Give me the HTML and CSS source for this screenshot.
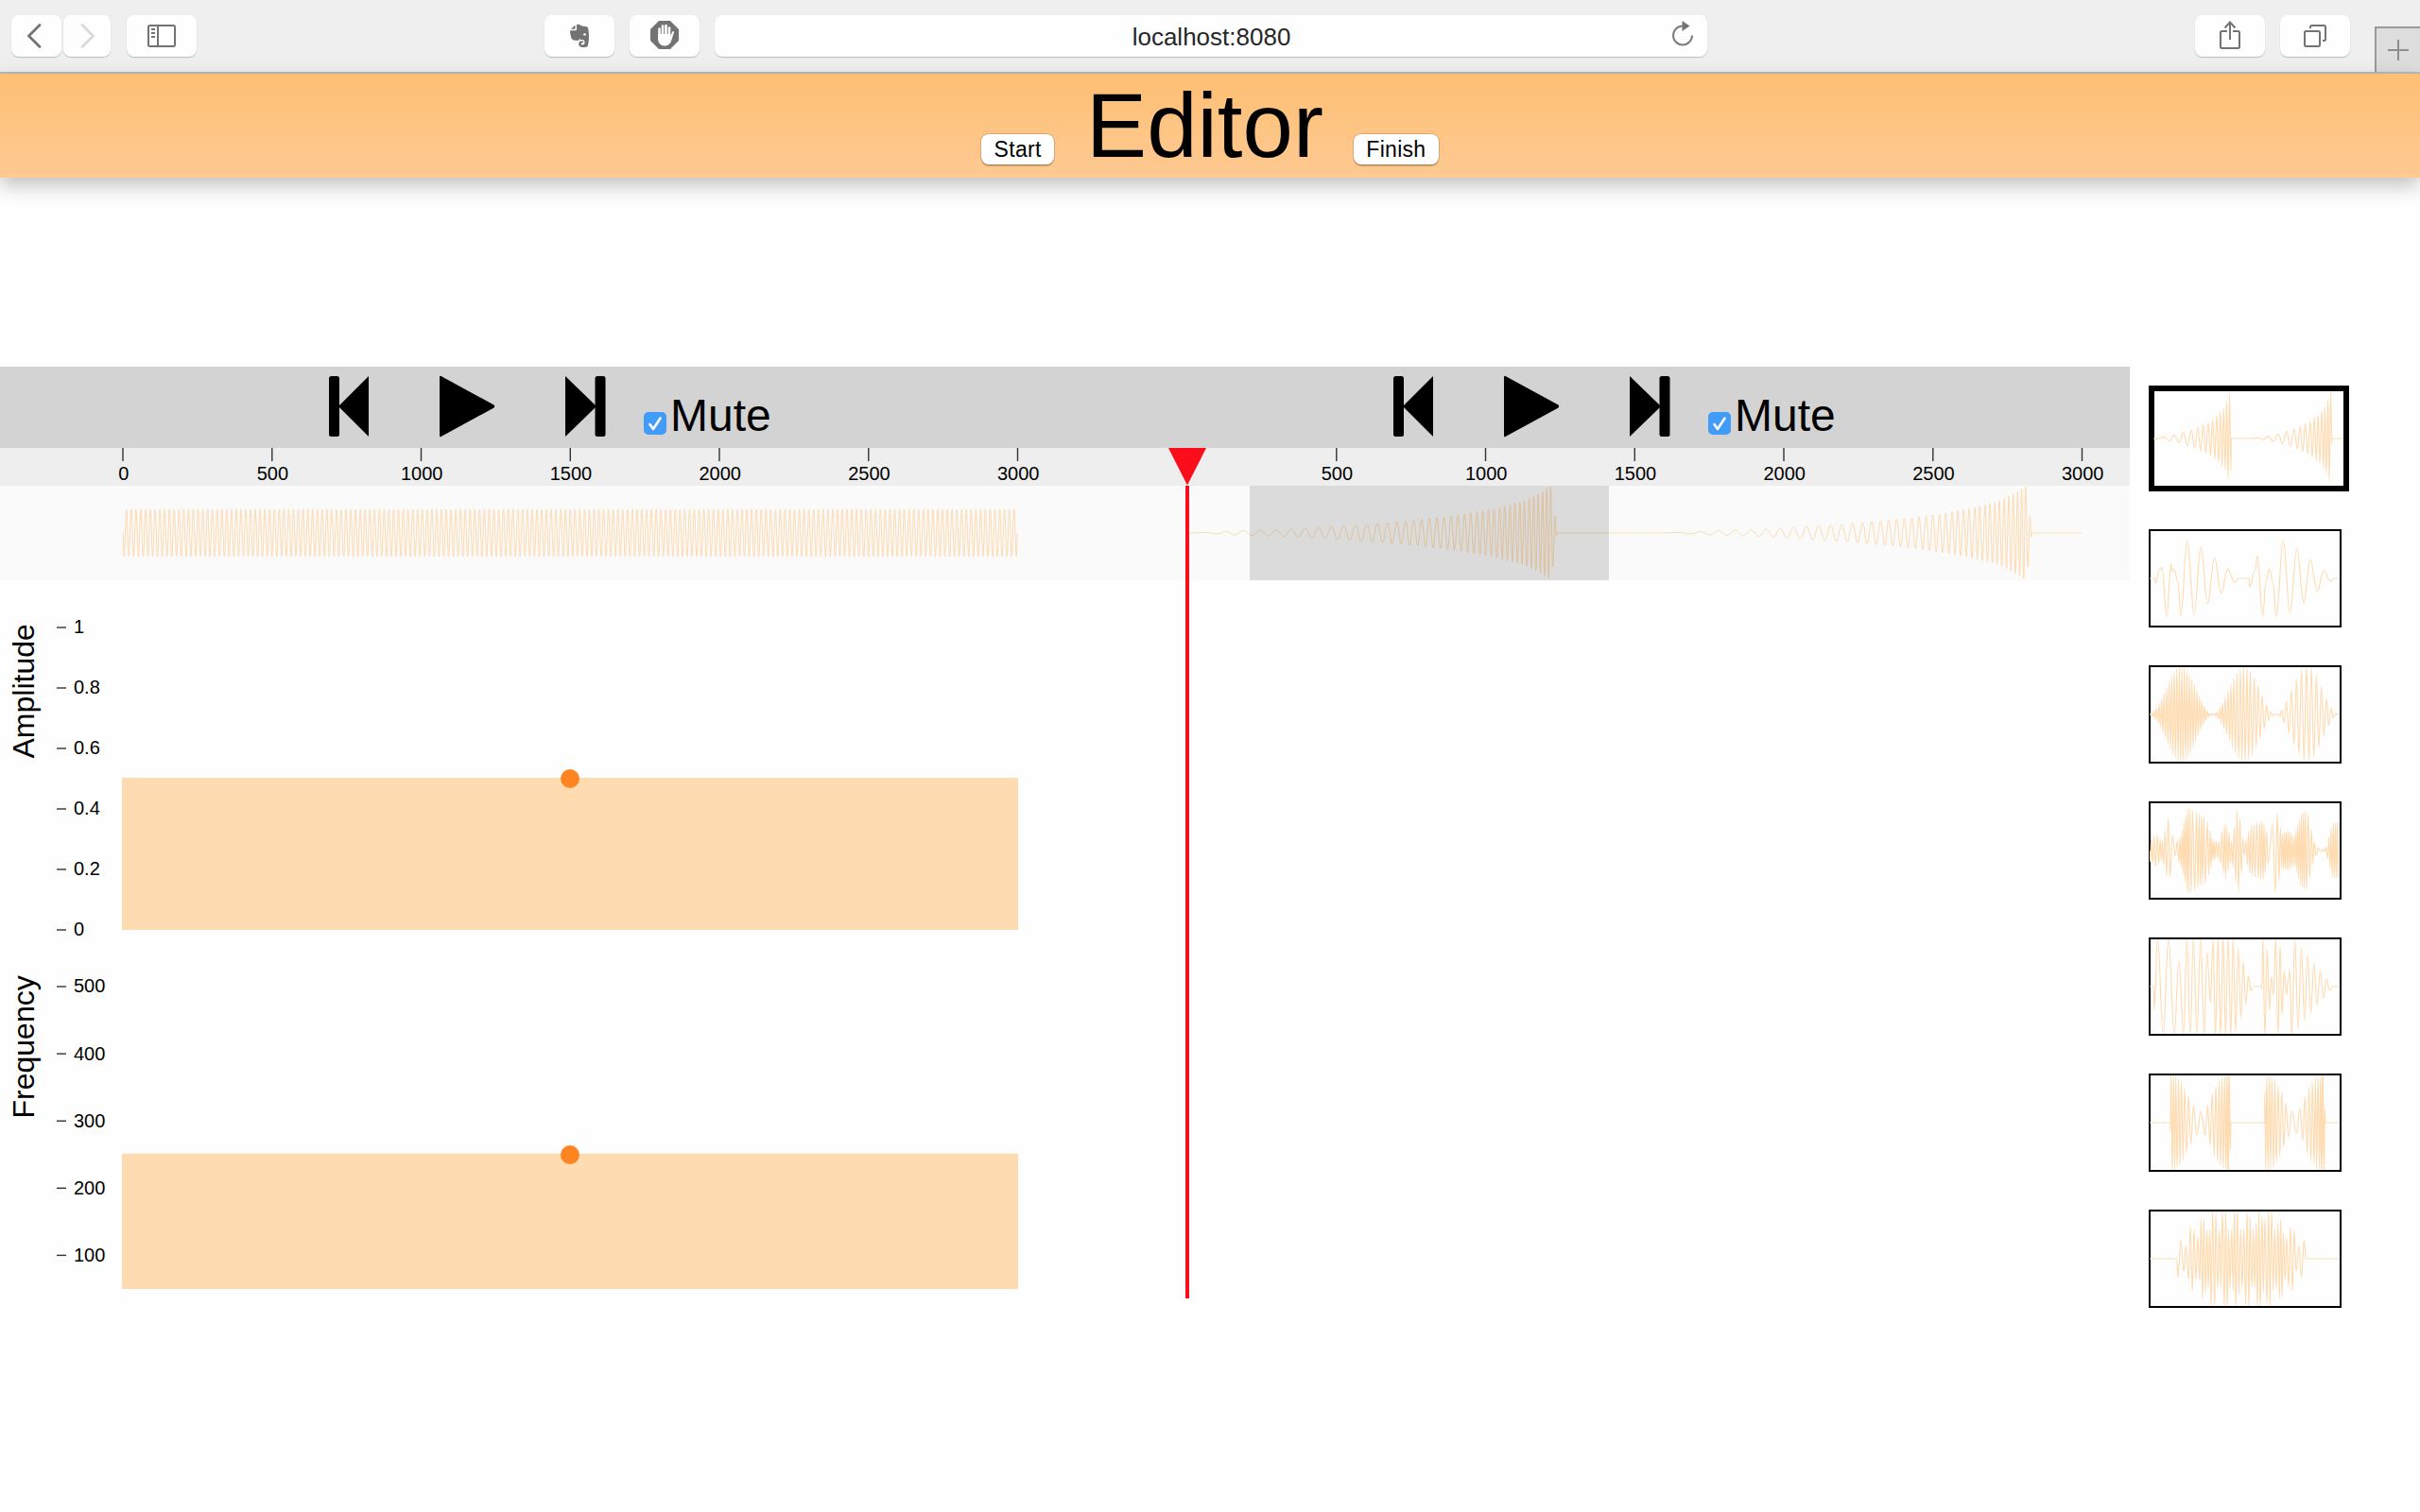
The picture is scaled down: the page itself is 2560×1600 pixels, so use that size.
FILE: index.html
```html
<!DOCTYPE html>
<html lang="en">
<head>
<meta charset="utf-8">
<title>Editor</title>
<link rel="stylesheet" href="styles.css">
</head>
<body>
<div class="toolbar">
  <div class="tool tool-back"><svg width="16" height="26" viewBox="0 0 16 26"><path d="M14 1.500 2.500 13 14 24.500" class="stroke thick"/></svg></div>
  <div class="tool tool-forward"><svg width="16" height="26" viewBox="0 0 16 26"><path d="M2 1.500 13.500 13 2 24.500" class="stroke thick faded"/></svg></div>
  <div class="tool tool-sidebar"><svg width="30" height="24" viewBox="0 0 30 24"><rect x="1" y="1" width="28" height="22" rx="1.500" class="stroke"/><path d="M11 1v22M4 5h4M4 9h4M4 13h4" class="stroke"/></svg></div>
  <div class="tool tool-clip"><svg width="20" height="26" viewBox="0 0 20 26"><path d="M7 1C10 .5 11 1.500 12 2.500C15 2.700 18.500 3 19 4.500C20.400 10 20.300 18 18.800 23.500C18.300 25.500 13 25.400 11 24.500C8.500 23.500 8.700 18.800 11.500 18.500H14V20.200H12.300C11.400 20.700 11.700 22.300 13 22.500C14.600 22.700 15.500 21.500 15.500 20C15.500 17.500 14 16.800 12 17.200C11.200 17.500 10.800 16.500 10.600 15.500C10 18 8 18 6 17.800C2 17.500 1.600 16 .8 13C0 10.500 0 8.500 .3 7.300H5.500C6.500 7.300 7 6.800 7 5.800ZM1 5.800 5.500 1.500V5.800ZM14 12C15 12.700 16.300 12.900 17 12C16.800 9.800 14 9.500 14 12Z" fill-rule="evenodd" class="solid"/></svg></div>
  <div class="tool tool-block"><svg width="30" height="30" viewBox="0 0 30 30"><path d="M9 0h12l9 9v12l-9 9H9l-9-9V9z" class="solid"/><path d="M9.500 8.500V17M13 5.500V15M16.500 5V15M20 7.500V16" class="finger"/><path d="M8 14h13.500v2.500l1.500-4.500c.6-1.500 2.200-1 2 .3L22.500 20c-1 4-3.500 6.500-7.500 6.500S8 23 8 19z" fill="#fff"/></svg></div>
  <div class="address"><span class="url">localhost:8080</span><svg class="reload" width="24" height="28" viewBox="0 0 24 28"><path d="M22 15.500A10 10 0 1 1 12 5.500" class="stroke light"/><path d="M11.500 0 19.500 5.500 11.500 11z" class="solid light-fill"/></svg></div>
  <div class="tool tool-share"><svg width="22" height="30" viewBox="0 0 22 30"><path d="M8 11H2.500Q1 11 1 12.500V27.500Q1 29 2.500 29h17Q21 29 21 27.500v-15Q21 11 19.500 11H14M11 1.500V20M5.500 7.500 11 1.500 16.500 7.500" class="stroke"/></svg></div>
  <div class="tool tool-tabs"><svg width="24" height="24" viewBox="0 0 24 24"><rect x="1" y="7" width="16" height="16" rx="1.500" class="stroke"/><path d="M7 4V2.500Q7 1 8.500 1h13Q23 1 23 2.500v13Q23 17 21.500 17H20" class="stroke"/></svg></div>
  <div class="new-tab"><svg width="22" height="22" viewBox="0 0 22 22"><path d="M11 0v22M0 11h22" class="stroke plus"/></svg></div>
</div>

<header class="header">
  <button class="push push-start">Start</button>
  <h1 class="title">Editor</h1>
  <button class="push push-finish">Finish</button>
</header>

<main class="editor">
  <div class="tracks">
    <section class="track">
      <div class="controls">
        <svg class="prev" width="44" height="66" viewBox="0 0 44 66"><rect x="1" y="1" width="11" height="64" rx="2.500"/><path d="M43 1v64L11 33z"/></svg>
        <svg class="play" width="60" height="66" viewBox="0 0 60 66"><path d="M1 2Q1 0 3 1.300L58.500 31.500Q60 33 58.500 34.500L3 64.700Q1 66 1 64z"/></svg>
        <svg class="next" width="44" height="66" viewBox="0 0 44 66"><rect x="32.500" y="1" width="11" height="64" rx="2.500"/><path d="M1 1v64L34 33z"/></svg>
        <span class="check"><svg width="24" height="24" viewBox="0 0 24 24"><path d="M6.500 13 10 18 17.500 6.500" class="tick-mark"/></svg></span>
        <span class="mute">Mute</span>
      </div>
      <svg class="axis" width="1126" height="40" data-from="0"></svg>
      <svg class="wave" width="1126" height="100"><path id="wave-a" class="line"/></svg>
      <svg class="panel" width="1126" height="400">
        <text class="name" transform="translate(35.500 188.500) rotate(-90)">Amplitude</text>
        <g id="amp-axis"></g>
        <rect x="129" y="209" width="948" height="161" class="area"/>
        <circle cx="603" cy="210" r="10" class="handle"/>
      </svg>
      <svg class="panel" width="1126" height="370">
        <text class="name" transform="translate(35.500 169.500) rotate(-90)">Frequency</text>
        <g id="freq-axis"></g>
        <rect x="129" y="206.700" width="948" height="143.300" class="area"/>
        <circle cx="603" cy="208" r="10" class="handle"/>
      </svg>
    </section>
    <section class="track track-right">
      <div class="controls">
        <svg class="prev" width="44" height="66" viewBox="0 0 44 66"><rect x="1" y="1" width="11" height="64" rx="2.500"/><path d="M43 1v64L11 33z"/></svg>
        <svg class="play" width="60" height="66" viewBox="0 0 60 66"><path d="M1 2Q1 0 3 1.300L58.500 31.500Q60 33 58.500 34.500L3 64.700Q1 66 1 64z"/></svg>
        <svg class="next" width="44" height="66" viewBox="0 0 44 66"><rect x="32.500" y="1" width="11" height="64" rx="2.500"/><path d="M1 1v64L34 33z"/></svg>
        <span class="check"><svg width="24" height="24" viewBox="0 0 24 24"><path d="M6.500 13 10 18 17.500 6.500" class="tick-mark"/></svg></span>
        <span class="mute">Mute</span>
      </div>
      <svg class="axis" width="1127" height="40" data-from="500"></svg>
      <svg class="wave" width="1127" height="100"><path id="wave-b" class="line"/><rect x="196" y="0" width="380" height="100" class="brush"/></svg>
    </section>
    <svg class="cursor" width="40" height="900" viewBox="0 0 40 900"><path d="M0 0H40L20 39.500z"/><rect x="18" y="40" width="4" height="860"/></svg>
  </div>
  <aside class="library" id="library">
    <div class="clip clip-active"><svg width="201" height="100" viewBox="-3 0 603 300"><path class="line"/></svg></div>
    <div class="clip"><svg width="201" height="100" viewBox="-3 0 603 300"><path class="line"/></svg></div>
    <div class="clip"><svg width="201" height="100" viewBox="-3 0 603 300"><path class="line"/></svg></div>
    <div class="clip"><svg width="201" height="100" viewBox="-3 0 603 300"><path class="line"/></svg></div>
    <div class="clip"><svg width="201" height="100" viewBox="-3 0 603 300"><path class="line"/></svg></div>
    <div class="clip"><svg width="201" height="100" viewBox="-3 0 603 300"><path class="line"/></svg></div>
    <div class="clip"><svg width="201" height="100" viewBox="-3 0 603 300"><path class="line"/></svg></div>
  </aside>
</main>
<script src="waves.js"></script>
</body>
</html>
```

FILE: styles.css
```css
* { box-sizing: border-box; }
body {
  margin: 0;
  min-height: 1600px;
  background: #fefefe;
  color: #000;
  font-family: "Liberation Sans", Arial, sans-serif;
}
svg { display: block; flex: none; }

/* Browser toolbar */
.toolbar {
  display: flex;
  align-items: flex-start;
  height: 78px;
  padding: 16px 0 0 12px;
  background: #efefef;
  border-bottom: 2px solid #b8bab8;
}
.tool {
  display: flex;
  flex: none;
  align-items: center;
  justify-content: center;
  width: 74px;
  height: 44px;
  background: #fefefe;
  border-radius: 8px;
  box-shadow: 0 1px 1px #bbb;
}
.tool-back { width: 53px; padding-right: 5px; }
.tool-forward { width: 50px; margin-left: 2px; padding-left: 1px; }
.tool-sidebar { margin-left: 17px; }
.tool-clip { margin-left: 368px; }
.tool-block { margin-left: 16px; padding-bottom: 2px; }
.tool-share { margin-left: 516px; padding-bottom: 2px; }
.tool-tabs { margin-left: 16px; }
.address {
  display: flex;
  flex: none;
  align-items: center;
  width: 1050px;
  height: 44px;
  margin-left: 16px;
  padding: 0 14px 0 38px;
  background: #fefefe;
  border-radius: 8px;
  box-shadow: 0 1px 1px #bbb;
}
.url {
  flex: 1;
  padding: 3px 0 0 1px;
  color: #262626;
  font-size: 26px;
  text-align: center;
}
.reload { margin-bottom: 4px; }
.new-tab {
  flex: none;
  width: 48px;
  height: 48px;
  margin: 12px 0 0 26px;
  padding: 12px 0 0 12px;
  background: #ddd;
  border-top: 2px solid #999;
  border-left: 2px solid #999;
}
.stroke { fill: none; stroke: #737373; stroke-width: 2; }
.thick { stroke-width: 2.8; stroke-linecap: round; }
.faded { stroke: #dadada; }
.light { stroke: #7d7d7d; }
.light-fill { fill: #7d7d7d; }
.plus { stroke: #8e8e8e; }
.solid { fill: #737373; }
.finger { fill: none; stroke: #fff; stroke-width: 2.6; stroke-linecap: round; }

/* Page header */
.header {
  position: relative;
  display: flex;
  align-items: baseline;
  justify-content: center;
  gap: 33px;
  height: 110px;
  background: linear-gradient(#fdbf73, #ffc992);
  box-shadow: 0 8px 20px rgba(0, 0, 0, 0.25);
}
.title {
  margin: 0 -1px 0 1px;
  font-size: 96px;
  font-weight: 400;
  line-height: 109px;
}
.push {
  height: 32px;
  padding: 0;
  border: 0;
  border-radius: 8px;
  background: #fff;
  box-shadow: 0 0 0 1px rgba(0, 0, 0, 0.14), 0 2px 1px rgba(0, 0, 0, 0.2);
  color: #000;
  font: 23px/32px "Liberation Sans", Arial, sans-serif;
  letter-spacing: 0.3px;
}
.push-start { width: 77px; }
.push-finish { width: 90px; }

/* Editor */
.editor { display: flex; margin-top: 200px; }
.tracks {
  position: relative;
  display: grid;
  grid-template-columns: 1126px 1127px;
}
.controls {
  display: flex;
  align-items: flex-start;
  height: 86px;
  padding: 9px 0 0 347px;
  background: #d3d3d3;
}
.play { margin-left: 73px; }
.next { margin-left: 73px; }
.check {
  width: 24px;
  height: 24px;
  margin: 39px 0 0 40px;
  border-radius: 5px;
  background: #419bf9;
}
.tick-mark { fill: none; stroke: #fff; stroke-width: 2.6; stroke-linecap: round; stroke-linejoin: round; }
.mute { margin: 18px 0 0 4px; font-size: 48px; line-height: 49px; }
.axis { background: #eee; font-size: 20px; }
.axis text { text-anchor: middle; }
.tick { stroke: #333; stroke-width: 1.4; }
.wave { background: #fafafa; }
.line { fill: none; stroke: #fedbb0; stroke-width: 1; }
.brush { fill: #000; fill-opacity: 0.12; }
.panel { font-size: 20px; }
.name { font-size: 32px; }
.area { fill: #fedbb0; }
.handle { fill: #ff8422; }
.cursor { position: absolute; left: 1236px; top: 86px; fill: #fc0d1b; }

/* Clip library */
.library {
  display: flex;
  flex-direction: column;
  gap: 40px;
  padding: 20px;
}
.clip { width: 204px; border: 2px solid #000; }
.clip-active { width: 212px; border-width: 6px; }
.clip svg { margin-left: -1px; }
.clip .line { stroke-width: 3.4; }
```

FILE: waves.js
```js
// Smooth curve through successive extremes, flat at each of them.
function curve(points) {
  let d = "M" + points[0].join(" ");
  for (let i = 1; i < points.length; i++) {
    const [x0, y0] = points[i - 1], [x1, y1] = points[i], c = (x1 - x0) * 0.37;
    d += "C" + [x0 + c, y0, x1 - c, y1, x1, y1].map(v => v.toFixed(2)).join(" ");
  }
  return d;
}
function parse(text) {
  return text.trim().split(/\s+/).map(p => p.split(",").map(Number));
}
// Peaks given as x,height; the troughs lie halfway between.
function mirrored(peaks, mid) {
  const out = [];
  peaks.forEach(([x, a], i) => {
    out.push([x, mid - a]);
    const n = peaks[i + 1];
    if (n) out.push([(x + n[0]) / 2, mid + (a + n[1]) / 2]);
  });
  return out;
}
const shift = (pts, dx, dy) => pts.map(([x, y]) => [x - dx, y - dy]);

// Constant tone
const tone = [[130, 50]];
for (let i = 0; i < 375; i++) tone.push([130 + (i + 0.5) * 2.524, i % 2 ? 25 : 75]);
tone.push([1076.5, 50]);
document.getElementById("wave-a").setAttribute("d", curve(tone));

// Rising chirp, played twice
const chirp = mirrored(parse(`371,.6 418,1.4 456,2.4 494,2.9 530,3.3 564,4 595,5 625,6 654,6.8
 681,7.7 708,8.5 733,9.3 757,10.2 779.5,11 800,12 820,12.7 838,13.5 856,14.4 873,15.2 890,16.2
 906,17 922,18 937,19 952,20.2 966,21.2 980,22.6 993,23.6 1006,24.5 1018,25.5 1031,27
 1042,28.6 1054,29.6 1065,31.2 1076,32.3 1086,34 1097,36 1107,38.8 1117,41.2 1127,44 1136,46.5
 1145,49.3`), 50).map(([x, y]) => [x / 2.119 - 26, y]);
chirp.unshift([132, 50]);
const end = chirp[chirp.length - 1][0];
chirp.push([end + 2.3, 86], [end + 4.6, 32], [end + 6, 54], [end + 6.7, 50]);
const again = chirp.map(([x, y]) => [x + 502.5, y]);
document.getElementById("wave-b").setAttribute("d", curve([[130, 50], ...chirp, ...again, [1076, 50]]));

// Time axes
document.querySelectorAll(".axis").forEach(svg => {
  const from = +svg.dataset.from;
  let html = "";
  for (let t = from; t <= 3000; t += 500) {
    const x = 130 + t * 0.3155;
    html += `<path class="tick" d="M${x.toFixed(1)} 0V14"/><text x="${(x + 0.7).toFixed(1)}" y="34">${t}</text>`;
  }
  svg.innerHTML = html;
});

// Value axes
function valueAxis(id, labels, top, step) {
  document.getElementById(id).innerHTML = labels.map((l, i) => {
    const y = top + i * step;
    return `<path class="tick" d="M60 ${y}H70"/><text x="78" y="${y + 6.4}">${l}</text>`;
  }).join("");
}
valueAxis("amp-axis", ["1", "0.8", "0.6", "0.4", "0.2", "0"], 50, 64);
valueAxis("freq-axis", ["500", "400", "300", "200", "100"], 30, 71.1);

// Library clips
const clips = [
  shift(parse(`84,252 98,253 117,247 135,260 151,241 166,266 179,233 192,275 204,226 215,282 225,217
   234,291 242,208 250,298 258,202 265,307 272,191 279,318 284.5,180 291,327 296,167 302,341
   306.5,156 312,353 316.5,135 321,380 325.5,112 330,355 331,252 400,252 415,250 431,256 448,245
   464,261 480,238 494,269 506.5,230 519,277 530.5,223 541,285 549.5,214 558,293 566,206 574,300
   582,198 588,311 594.5,187 601,322 606.5,178 612.5,332 618,163 624,346 628,152 633,362 638,127
   642,389 646.5,104 650,266 651,252 683,252`), 87, 102),
  shift(parse(`72,696 89,696 90,712 104,666 108,668 111,661 126,818 140,649 142,673 149,666 162,708
   171,815 191,574 213,811 235,597 256,777 278,631 299,742 320,667 341,709 356,696 388,696 389,725
   408,666 414,626 431,818 441,705 452,666 463,708 474,818 496,574 517,808 539,600 561,773 582,636 604,738
   625,671 645,705 658,696 672,696`), 75, 546),
  shift(mirrored(parse(`72,1 79,3 86,10 94,20 102,32 110,48 117.5,67 126,84 134,103 142,121 150,133
   158,143 166,149 174,150 182,146 190,139 198,127 206,112 214,94 222,76 230,57 238,41 246,26 254,13
   262,3 270,1 278,1 286,8 295,20 303,35 312,54 321,73 330,94 339,114 349,132 360,144 370,150 381,147
   391,137 404,116 416,91 429,60 443,30 456,7 468,1 480,1 491,13 506,41 522,77 538,112 554,140 570,150
   585,146 601,121 617,87 633,50 648,20 662,3 672,1`), 1128), 75, 978),
  shift(parse(`72,240 74,275 77,203 81,281 86,192 90.5,292 96,191 101,283 105,204 109,272 112,208
   116.5,285 121,178 125.5,320 131,139 137,322 144,193 154,258 160,210 165,277 168,198 172,290 175,178
   178,314 181,152 184,338 187,127 190,365 192.5,106 195.5,374 199,108 203.5,371 208,112 215,365
   221,119 225,357 229,126 233,350 236.5,129 240,347 244,135 249,344 255,148 259.5,317 264,178
   266.5,290 270,202 273,271 276,210 279,269 283,211 288,265 292,214 297,281 301.5,182 306,310
   309.5,157 313,329 316.5,162 320.5,306 324,184 328,282 332,210 336,291 340.5,165 345,338 349.5,115
   354,371 358.5,139 363,311 367.5,202 373,257 378,208 382.5,287 386,181 390,311 394,160 398,320
   402.5,159 406.5,323 412,153 417,327 421.5,150 425,330 428.5,148 432,332 435,157 438.5,314
   442.5,178 448,282 462,156 471,372 477,122 483,334 487,166 491,296 494,186 497,297 500,183 502,297
   505,180 508,300 511,178 514,302 517,182 520,296 523,188 526,290 530,195 533,290 536,180 539,308
   542,159 545,329 548,141 551,351 554,123 557,356 560,120 563,361 566,116 570,365 575,126 580,329
   585,175 590,283 594,213 600,257 606,232 615,242 622,236 627,245 632,230 637,266 641,198 645,296
   648,169 651.5,324 655,152 658.5,328 662,151 665,328 668,151 671,328`), 75, 90),
  shift(parse(`72,672 85,672 87,745 97,515 115,825 132,518 150,826 165,590 180,826 190,516 201,826
   211,516 222,826 234,518 245,826 254,565 265,721 273,525 281,826 289,518 297,826 305,518 313,826
   321,518 329.5,826 337,520 345,815 353,552 361.5,770 369,595 377,727 385.5,638 393,685 400,672
   427,672 428,680 431,515 438,826 445,556 452,746 458,640 465,698 472,518 479.5,826 486,543 492,761
   499,624 506,698 512,648 514,645 516,616 523,826 533,524 543,807 553.5,549 563.5,782 573,574
   583.5,757 593.5,599 603,732 613.5,623 623.5,709 633,649 643,684 652,672 672,672`), 75, 522),
  shift(parse(`72,234 137,234 138,260 140,80 144,390 148,84 151.5,382 155,87 159,378 164,94 168,371
   173,103 178,353 183,124 189,331 195,150 203,301 211,181 221,275 235,199 248,275 256,182 264,305
   270.5,142 277,338 282,118 288,359 292.5,100 297,371 301.5,91 306,379 310,87 314,381 317,86 319,381
   321,86 322.5,384 325,84 328,322 330,234 437,234 438,134 440,384 444,86 448,381 452,87 456,380
   460,90 465,374 469.5,98 474,359 480,116 485,339 491,139 497.5,311 504,172 513,281 523,197 538,268
   549,190 558,290 565,155 572,329 578,124 584,353 588.5,106 594,368 598,94 602,378 606.5,88 611,381
   614,87 617,381 619.5,86 621,381 622,84 626,384 628,193 630,234 672,234`), 75, 84),
  shift(parse(`72,666 158,666 162,725 171,607 180,707 187,625 196,730 201,565 208,767 213,574 219,732
   224.5,598 231,734 235,541 240,790 244,541 249,773 254,573 258,759 263,572 267,820 272,512 278,820
   282,525 288,759 293.5,573 298,759 303,518 309,820 313,516 318,820 322.5,573 327,759 332,573 337,767
   341,512 345,820 350.5,512 355,779 361,572 366,759 371,572 377,812 381,512 387,820 390,534 396,759
   400.5,572 405,759 410,553 414,820 419,512 423,820 429,531 433,773 438,540 444,809 449.5,512 454,820
   459,512 464,765 469,572 474,759 479.5,552 484,790 488,541 492,790 496.5,585 502,732 507,598 513,755
   519,565 525,767 531,577 537,707 545,625 554,725 562,607 568,666 672,666`), 75, 516)
];
document.querySelectorAll("#library .line").forEach((path, i) => path.setAttribute("d", curve(clips[i])));
```
